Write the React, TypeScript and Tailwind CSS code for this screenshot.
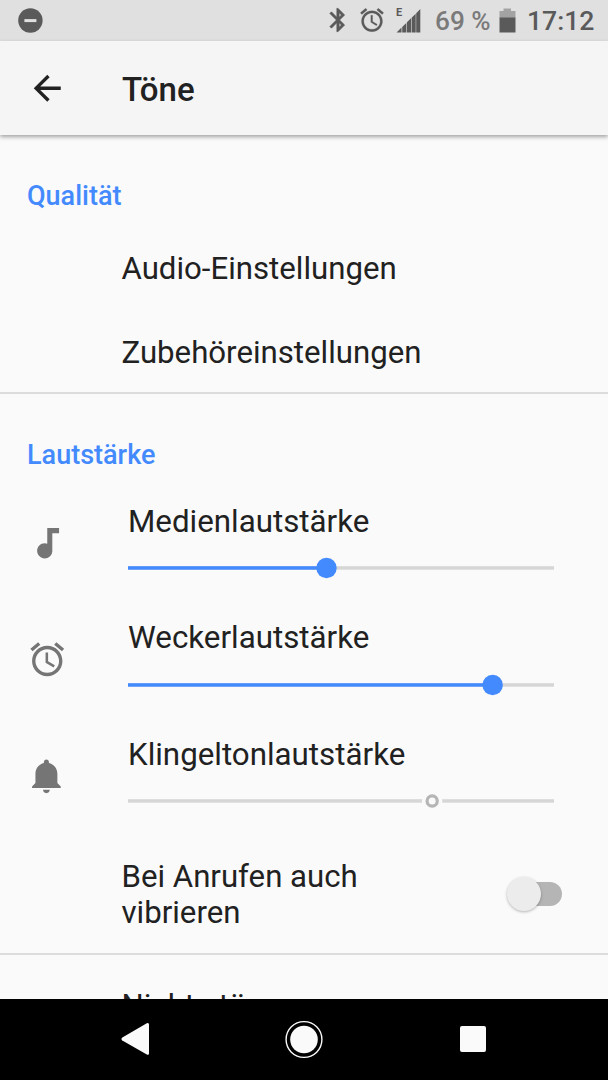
import type { ReactNode } from 'react';

const ICONS = {
  back: 'M20 11H7.83l5.59-5.59L12 4l-8 8 8 8 1.41-1.41L7.83 13H20v-2z',
  music:
    'M12 3v9.28c-.47-.17-.97-.28-1.5-.28C8.01 12 6 14.01 6 16.5S8.01 21 10.5 21c2.31 0 4.2-1.75 4.45-4H15V6h4V3h-7z',
  alarm:
    'M22 5.72l-4.6-3.86-1.29 1.53 4.6 3.86L22 5.72zM7.88 3.39L6.6 1.86 2 5.71l1.29 1.53 4.59-3.85zM12.5 8H11v6l4.75 2.85.75-1.23-4-2.37V8zM12 4c-4.97 0-9 4.03-9 9s4.02 9 9 9c4.97 0 9-4.03 9-9s-4.03-9-9-9zm0 16c-3.87 0-7-3.13-7-7s3.13-7 7-7 7 3.13 7 7-3.13 7-7 7z',
  bell: 'M11.5 22c1.1 0 2-.9 2-2h-4c0 1.1.9 2 2 2zm6.5-6v-5.5c0-3.07-2.13-5.64-5-6.32V3.5c0-.83-.67-1.5-1.5-1.5S10 2.67 10 3.5v.68c-2.87.68-5 3.25-5 6.32V16l-2 2v1h17v-1l-2-2z',
  bluetooth:
    'M17.71 7.71L12 2h-1v7.59L6.41 5 5 6.41 10.59 12 5 17.59 6.41 19 11 14.41V22h1l5.71-5.71-4.3-4.29 4.3-4.29zM13 5.83l1.88 1.88L13 9.59V5.83zm1.88 10.46L13 18.17v-3.76l1.88 1.88z',
};

function Icon({ path, className }: { path: string; className: string }) {
  return (
    <svg viewBox="0 0 24 24" fill="currentColor" className={className}>
      <path d={path} />
    </svg>
  );
}

function StatusBar() {
  return (
    <div className="flex h-[40.5px] shrink-0 items-center bg-[#e0e0e0] pl-[18px] pr-[13px] text-[#5a5a5a]">
      <svg viewBox="0 0 25 25" className="size-[25px]">
        <circle cx="12.4" cy="12.5" r="12.2" fill="#5a5a5a" />
        <rect x="6.4" y="11.1" width="12" height="3" fill="#e0e0e0" />
      </svg>
      <div className="ml-auto flex items-center">
        <Icon path={ICONS.bluetooth} className="size-[28px] stroke-current stroke-[0.5]" />
        <Icon path={ICONS.alarm} className="ml-[6px] size-[28px] stroke-current stroke-[0.2]" />
        {/* Mobile signal with EDGE marker */}
        <div className="relative ml-[10px] h-[25px] w-[25px]">
          <span className="absolute left-0 -top-px text-[11px] font-bold leading-[11px]">E</span>
          <svg viewBox="0 0 25 25" className="size-full" fill="#5a5a5a">
            <path d="M.5 24.5L5.5 19.6V24.5zM6.2 18.9L10.3 14.9V24.5H6.2zM10.9 14.3L15 10.3V24.5H10.9zM15.6 9.7L19.7 5.7V24.5H15.6zM20.2 5.2L24.3 1.1V24.5H20.2z" />
          </svg>
        </div>
        <span className="ml-[14px] w-[57px] whitespace-nowrap pt-[2px] text-[26.2px] font-medium leading-[30px] text-[#7a7a7a]">
          69 %
        </span>
        <svg viewBox="0 0 17 25" className="ml-[7px] h-[25px] w-[17px]">
          <path d="M4.5.5h7.5v2.5h4.5v7H.5V3h4z" fill="#a3a3a3" />
          <path d="M.5 9.5h16v15H.5z" fill="#5a5a5a" />
        </svg>
        <span className="ml-[11px] w-[68px] whitespace-nowrap pt-[2px] text-[26.6px] font-medium leading-[30px]">
          17:12
        </span>
      </div>
    </div>
  );
}

function SectionTitle({ children }: { children: ReactNode }) {
  return <h2 className="h-[91px] pl-[27px] pt-[45px] text-[27px] font-medium leading-8 text-[#448aff]">{children}</h2>;
}

function LinkRow({ label }: { label: string }) {
  return <div className="flex h-[84px] items-center pl-[121.5px] pt-[2px] text-[31.2px] leading-9">{label}</div>;
}

type VolumeRowProps = {
  icon: string;
  label: string;
  value: number;
  disabled?: boolean;
};

function VolumeRow({ icon, label, value, disabled }: VolumeRowProps) {
  return (
    <div className="flex h-[116.5px] items-center pl-[27px] pr-[54px]">
      <Icon path={icon} className="mb-px size-[40.5px] shrink-0 text-[#757575]" />
      <div className="ml-[60.5px] h-full flex-1 pt-[18.7px]">
        <div className="text-[31.3px] leading-9">{label}</div>
        <svg className="mt-[17.8px] block h-[22px] w-full overflow-visible">
          <rect y="9.2" width="100%" height="3.5" fill="#d6d6d6" />
          {disabled ? (
            <>
              <circle cx={`${value}%`} cy="11" r="10.2" fill="#fafafa" />
              <circle cx={`${value}%`} cy="11" r="5.1" fill="none" stroke="#b5b5b5" strokeWidth="3.2" />
            </>
          ) : (
            <>
              <rect y="9.2" width={`${value}%`} height="3.5" fill="#448aff" />
              <circle cx={`${value}%`} cy="11" r="10.2" fill="#448aff" />
            </>
          )}
        </svg>
      </div>
    </div>
  );
}

function Switch() {
  return (
    <div className="relative h-6 w-[52px] rounded-full bg-[#b5b5b5]">
      <div className="absolute -left-[3px] -top-[5px] size-[34px] rounded-full bg-[#ececec] shadow-[0_1px_3px_rgba(0,0,0,0.28)]" />
    </div>
  );
}

function NavBar() {
  return (
    <div className="flex h-[81px] shrink-0 items-center bg-black pb-px pl-[121px] pr-[122px] text-[#fafafa]">
      <svg viewBox="0 0 29 34" className="h-[34px] w-[29px]" fill="currentColor">
        <path d="M1.3 15.6L25.8 1.3Q28 .4 28 2.6V31.3Q28 33.5 25.8 32.5L1.3 18.4Q-.4 17 1.3 15.6z" />
      </svg>
      <svg viewBox="0 0 38 38" className="ml-[135px] size-[38px] overflow-visible" fill="currentColor">
        <circle cx="19" cy="19.5" r="17.9" fill="none" stroke="currentColor" strokeWidth="1.4" />
        <circle cx="19" cy="19.5" r="13.8" />
      </svg>
      <div className="ml-auto size-[26px] rounded-[2px] bg-[#fafafa]" />
    </div>
  );
}

export default function App() {
  return (
    <div className="flex h-[1080px] w-[608px] flex-col overflow-hidden bg-[#fafafa] font-['Roboto',sans-serif] text-[#212121]">
      <StatusBar />
      <header className="z-10 flex h-[94.5px] shrink-0 items-center bg-[#f5f5f5] pl-[27px] shadow-[0_2px_4px_rgba(0,0,0,0.35)]">
        <Icon path={ICONS.back} className="size-[40.5px]" />
        <h1 className="ml-[54.5px] pt-[5px] text-[33px] font-medium leading-10">Töne</h1>
      </header>

      <main className="min-h-0 flex-1 overflow-hidden">
        <section className="h-[259px] border-b-2 border-[#dcdcdc]">
          <SectionTitle>Qualität</SectionTitle>
          <LinkRow label="Audio-Einstellungen" />
          <LinkRow label="Zubehöreinstellungen" />
        </section>

        <section className="h-[561px] border-b-2 border-[#dcdcdc]">
          <SectionTitle>Lautstärke</SectionTitle>
          <VolumeRow icon={ICONS.music} label="Medienlautstärke" value={46.6} />
          <VolumeRow icon={ICONS.alarm} label="Weckerlautstärke" value={85.6} />
          <VolumeRow icon={ICONS.bell} label="Klingeltonlautstärke" value={71.4} disabled />
          <div className="flex h-[119px] items-center justify-between pl-[121.5px] pr-[46px]">
            <span className="w-[270px] pt-[2px] text-[31.2px] leading-9">Bei Anrufen auch vibrieren</span>
            <Switch />
          </div>
        </section>

        <div className="pl-[121.5px] pt-[33px] text-[31.2px] leading-9">Nicht stören</div>
      </main>

      <NavBar />
    </div>
  );
}
